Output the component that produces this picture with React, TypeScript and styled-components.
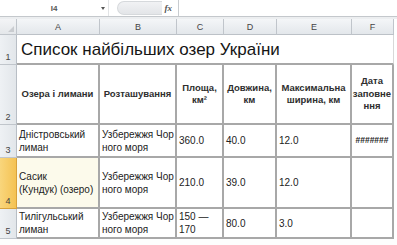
import React from "react";
import styled, { createGlobalStyle } from "styled-components";

const Global = createGlobalStyle`
  html, body { margin: 0; padding: 0; background: #fdfdfd; }
  body { width: 397px; height: 245px; overflow: hidden; font-family: "Liberation Sans", Arial, sans-serif; }
`;

const Page = styled.div`
  width: 397px;
  height: 245px;
  display: flex;
  flex-direction: column;
  background: #fdfdfd;
`;

const FormulaBar = styled.div`
  height: 16px;
  display: flex;
  align-items: stretch;
  border-bottom: 1px solid #c4c8cc;
  background: #fff;
`;

const NameBox = styled.div`
  width: 108px;
  display: flex;
  align-items: center;
  justify-content: center;
  position: relative;
  font-size: 8px;
  font-weight: bold;
  color: #555;
  border-right: 1px solid #e2e4e6;
`;

const Arrow = styled.span`
  position: absolute;
  right: 3px;
  top: 7px;
  width: 0;
  height: 0;
  border-left: 2.5px solid transparent;
  border-right: 2.5px solid transparent;
  border-top: 3px solid #555;
`;

const FxArea = styled.div`
  width: 69px;
  display: flex;
  align-items: center;
  gap: 3px;
  padding-left: 8px;
  box-sizing: border-box;
`;

const Pill = styled.div`
  flex: 1;
  height: 12px;
  border-radius: 7px 0 0 7px;
  background: linear-gradient(#f1f2f4, #e3e5e8);
  border: 1px solid #d6d9dc;
  border-right: none;
`;

const Fx = styled.span`
  font-family: "Liberation Serif", serif;
  font-style: italic;
  font-weight: bold;
  font-size: 9px;
  color: #555;
  padding-right: 6px;
`;

const FormulaInput = styled.div`
  flex: 1;
  border-left: 1px solid #c8ccd0;
  background: #fff;
`;

const Gap = styled.div`
  height: 2px;
  background: #eceef0;
`;

const Sheet = styled.div`
  display: grid;
  grid-template-columns: 17px 83px 77px 47px 53px 75px 42px 1fr;
  grid-template-rows: 16px 30px 60px 33px 51px 30px;
`;

const Corner = styled.div`
  background: linear-gradient(#f3f4f6, #e4e7ea);
  border-right: 1px solid #c0c5cb;
  border-bottom: 1px solid #c0c5cb;
  position: relative;
  &::after {
    content: "";
    position: absolute;
    right: 2px;
    bottom: 2px;
    border-left: 6px solid transparent;
    border-bottom: 6px solid #c9ccd0;
  }
`;

const ColHead = styled.div`
  background: linear-gradient(#f4f6f8, #e3e7eb);
  border-right: 1px solid #c0c5cb;
  border-bottom: 1px solid #bcc1c7;
  display: flex;
  align-items: center;
  justify-content: center;
  font-size: 9px;
  color: #444;
`;

const RowHead = styled.div<{ $active?: boolean }>`
  background: ${(p) => (p.$active ? "linear-gradient(90deg, #f9d67c, #f4c253)" : "linear-gradient(90deg, #eef1f4, #e2e6ea)")};
  border-right: 1px solid ${(p) => (p.$active ? "#d8a23c" : "#b8bec5")};
  border-bottom: 1px solid ${(p) => (p.$active ? "#d8a23c" : "#c0c5cb")};
  display: flex;
  align-items: flex-end;
  justify-content: center;
  padding-bottom: 2px;
  box-sizing: border-box;
  font-size: 9px;
  color: #444;
`;

const Title = styled.div`
  grid-column: 2 / 8;
  border-bottom: 2px solid #a8a8a8;
  border-right: 1px solid #d8d8d8;
  display: flex;
  align-items: center;
  padding-left: 4px;
  padding-top: 1px;
  font-size: 17px;
  color: #151515;
  background: #fff;
`;

const Cell = styled.div<{ $center?: boolean; $bold?: boolean; $bg?: string; $hash?: boolean }>`
  border-right: 2px solid #a8a8a8;
  border-bottom: 2px solid #a8a8a8;
  background: ${(p) => p.$bg ?? "#fff"};
  display: flex;
  align-items: center;
  justify-content: ${(p) => (p.$center ? "center" : "flex-start")};
  text-align: ${(p) => (p.$center ? "center" : "left")};
  padding: 0 2px;
  box-sizing: border-box;
  font-size: ${(p) => (p.$hash ? 8.5 : p.$bold ? 9.5 : 10)}px;
  font-weight: ${(p) => (p.$bold || p.$hash ? "bold" : "normal")};
  line-height: ${(p) => (p.$bold ? "12.5px" : "13px")};
  color: ${(p) => (p.$bold ? "#2e2e2e" : "#222")};
  white-space: nowrap;
  overflow: hidden;
`;

const Filler = styled.div`
  background: #fff;
`;

const cols = ["A", "B", "C", "D", "E", "F"];

type Row = { n: number; h?: boolean; cells: React.ReactNode[] };

const rows: Row[] = [
  {
    n: 3,
    cells: [
      <>Дністровський<br />лиман</>,
      <>Узбережжя Чор<br />ного моря</>,
      "360.0",
      "40.0",
      "12.0",
      "#######",
    ],
  },
  {
    n: 4,
    h: true,
    cells: [
      <>Сасик<br />(Кундук) (озеро)</>,
      <>Узбережжя Чор<br />ного моря</>,
      "210.0",
      "39.0",
      "12.0",
      "",
    ],
  },
  {
    n: 5,
    cells: [
      <>Тилігульський<br />лиман</>,
      <>Узбережжя Чор<br />ного моря</>,
      <>150 —<br />170</>,
      "80.0",
      "3.0",
      "",
    ],
  },
];

export default function App() {
  return (
    <Page>
      <Global />
      <FormulaBar>
        <NameBox>
          I4
          <Arrow />
        </NameBox>
        <FxArea>
          <Pill />
          <Fx>fx</Fx>
        </FxArea>
        <FormulaInput />
      </FormulaBar>
      <Gap />
      <Sheet>
        <Corner />
        {cols.map((c) => (
          <ColHead key={c}>{c}</ColHead>
        ))}
        <Filler />

        <RowHead>1</RowHead>
        <Title>Список найбільших озер України</Title>
        <Filler />

        <RowHead>2</RowHead>
        <Cell $bold $center>Озера і лимани</Cell>
        <Cell $bold $center>Розташування</Cell>
        <Cell $bold $center>Площа,<br />км²</Cell>
        <Cell $bold $center>Довжина,<br />км</Cell>
        <Cell $bold $center>Максимальна<br />ширина, км</Cell>
        <Cell $bold $center>Дата<br />заповне<br />ння</Cell>
        <Filler />

        {rows.map((r) => (
          <React.Fragment key={r.n}>
            <RowHead $active={r.h}>{r.n}</RowHead>
            {r.cells.map((c, i) => (
              <Cell
                key={i}
                $center={i === 5}
                $hash={i === 5}
                $bg={r.h && i === 0 ? "#fcfaeb" : undefined}
              >
                {c}
              </Cell>
            ))}
            <Filler />
          </React.Fragment>
        ))}
      </Sheet>
    </Page>
  );
}
